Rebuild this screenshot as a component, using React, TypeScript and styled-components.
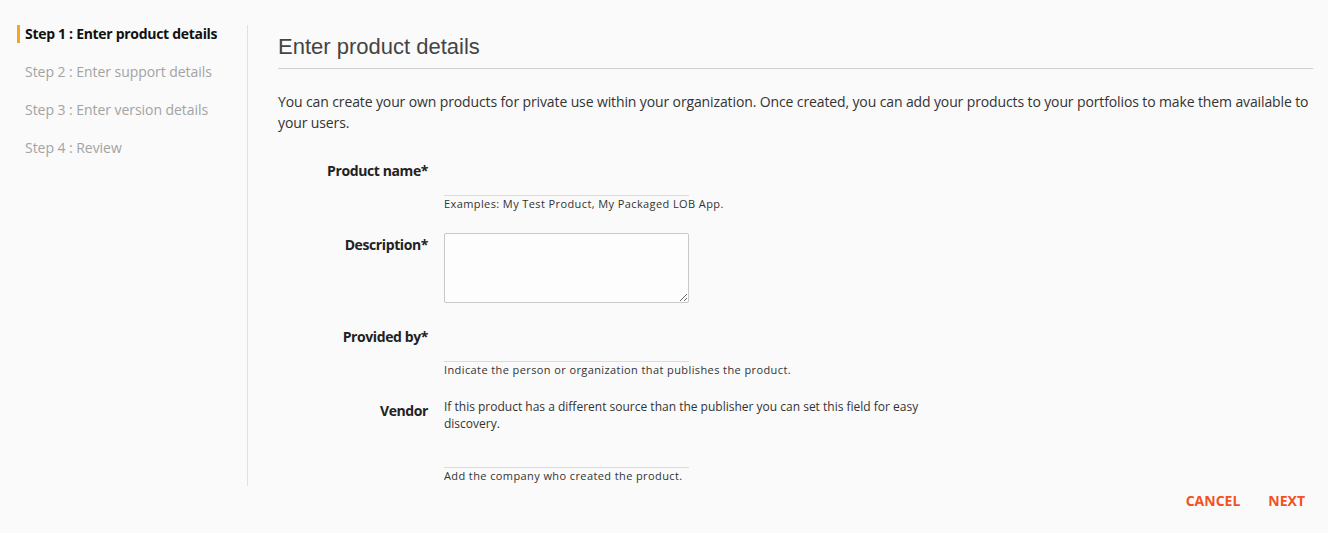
import React from "react";
import styled, { createGlobalStyle } from "styled-components";

const GlobalStyle = createGlobalStyle`
  html, body {
    margin: 0;
    padding: 0;
    background: #fafafa;
  }
  body {
    font-family: "Open Sans", "Liberation Sans", sans-serif;
    color: #333;
  }
`;

const steps = [
  "Step 1 : Enter product details",
  "Step 2 : Enter support details",
  "Step 3 : Enter version details",
  "Step 4 : Review",
];

const App = () => {
  const [current] = React.useState<number>(0);

  return (
    <Page>
      <GlobalStyle />
      <Top>
        <Sidebar>
          {steps.map((step, index) => (
            <StepItem key={index} active={index === current}>
              {step}
            </StepItem>
          ))}
        </Sidebar>
        <Main>
          <Title>Enter product details</Title>
          <Intro>
            You can create your own products for private use within your
            organization. Once created, you can add your products to your
            portfolios to make them available to your users.
          </Intro>

          <Row space={28}>
            <Label>Product name*</Label>
            <Field>
              <LineInput type="text" />
              <Hint>Examples: My Test Product, My Packaged LOB App.</Hint>
            </Field>
          </Row>

          <Row space={22}>
            <Label offset={2}>Description*</Label>
            <Field>
              <TextArea />
            </Field>
          </Row>

          <Row space={24}>
            <Label>Provided by*</Label>
            <Field>
              <LineInput type="text" />
              <Hint>Indicate the person or organization that publishes the product.</Hint>
            </Field>
          </Row>

          <Row space={21}>
            <Label offset={3}>Vendor</Label>
            <Field>
              <Description>
                If this product has a different source than the publisher you
                can set this field for easy discovery.
              </Description>
              <LineInput type="text" />
              <Hint>Add the company who created the product.</Hint>
            </Field>
          </Row>
        </Main>
      </Top>
      <Footer>
        <TextButton>Cancel</TextButton>
        <TextButton>Next</TextButton>
      </Footer>
    </Page>
  );
};

const Page = styled.div`
  padding-top: 25px;
  width: 1328px;
  box-sizing: border-box;
`;

const Top = styled.div`
  display: flex;
  align-items: stretch;
`;

const Sidebar = styled.nav`
  width: 248px;
  flex-shrink: 0;
  box-sizing: border-box;
  padding-left: 17px;
  border-right: 1px solid #e0e0e0;
  display: flex;
  flex-direction: column;
  gap: 20px;
`;

const StepItem = styled.div<{ active?: boolean }>`
  height: 18px;
  line-height: 18px;
  font-size: 14px;
  padding-left: 5px;
  border-left: 3px solid ${(p) => (p.active ? "#f5a623" : "transparent")};
  color: ${(p) => (p.active ? "#111" : "#a3a3a3")};
  font-weight: ${(p) => (p.active ? 700 : 400)};
  letter-spacing: ${(p) => (p.active ? "-0.3px" : "-0.05px")};
  white-space: nowrap;
`;

const Main = styled.main`
  flex: 1;
  padding: 0 15px 3px 30px;
  min-width: 0;
`;

const Title = styled.h1`
  margin: 8px 0 0;
  padding-bottom: 7px;
  font-family: "Liberation Sans", Arial, sans-serif;
  font-weight: 400;
  font-size: 22px;
  line-height: 28px;
  color: #444;
  border-bottom: 1px solid #cfcfcf;
`;

const Intro = styled.p`
  margin: 22px 0 0;
  font-size: 14px;
  line-height: 21px;
  letter-spacing: -0.12px;
  color: #333;
`;

const Row = styled.div<{ space: number }>`
  display: grid;
  grid-template-columns: 150px 480px;
  column-gap: 16px;
  align-items: start;
  margin-top: ${(p) => p.space}px;
`;

const Label = styled.label<{ offset?: number }>`
  text-align: right;
  font-weight: 700;
  font-size: 14px;
  line-height: 20px;
  letter-spacing: -0.4px;
  color: #222;
  padding-top: ${(p) => p.offset || 0}px;
`;

const Field = styled.div`
  display: flex;
  flex-direction: column;
  align-items: flex-start;
`;

const LineInput = styled.input`
  width: 245px;
  height: 35px;
  box-sizing: border-box;
  border: none;
  border-bottom: 1px solid #dcdcdc;
  background: transparent;
  outline: none;
  font-size: 14px;
  padding: 0;
`;

const Hint = styled.div`
  margin-top: 0;
  font-size: 11px;
  line-height: 15px;
  color: #333;
  letter-spacing: 0.4px;
`;

const TextArea = styled.textarea`
  width: 245px;
  height: 70px;
  box-sizing: border-box;
  border: 1px solid #c8c8c8;
  border-radius: 2px;
  background: #fdfdfd;
  resize: vertical;
  margin: 0;
`;

const Description = styled.div`
  width: 480px;
  margin-bottom: 1px;
  font-size: 12px;
  line-height: 17px;
  color: #333;
`;

const Footer = styled.div`
  display: flex;
  justify-content: flex-end;
  gap: 12px;
  padding: 1px 15px 0 0;
`;

const TextButton = styled.button`
  border: none;
  background: transparent;
  padding: 4px 8px;
  font-family: "Open Sans", "Liberation Sans", sans-serif;
  font-weight: 700;
  font-size: 14px;
  line-height: 20px;
  text-transform: uppercase;
  color: #f4511e;
  cursor: pointer;
`;

export default App;
